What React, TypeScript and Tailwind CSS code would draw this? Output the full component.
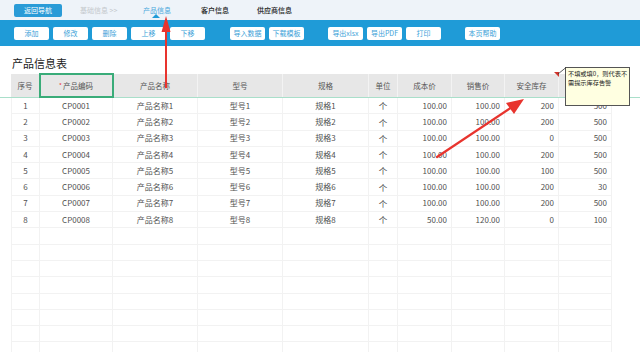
import React from 'react';

const font = { fontFamily: '"Noto Sans CJK SC", "Noto Sans", sans-serif' };

const rows = [
  ['1', 'CP0001', '产品名称1', '型号1', '规格1', '个', '100.00', '100.00', '200', '500'],
  ['2', 'CP0002', '产品名称2', '型号2', '规格2', '个', '100.00', '100.00', '200', '500'],
  ['3', 'CP0003', '产品名称3', '型号3', '规格3', '个', '100.00', '100.00', '0', '500'],
  ['4', 'CP0004', '产品名称4', '型号4', '规格4', '个', '100.00', '100.00', '200', '500'],
  ['5', 'CP0005', '产品名称5', '型号5', '规格5', '个', '100.00', '100.00', '100', '500'],
  ['6', 'CP0006', '产品名称6', '型号6', '规格6', '个', '100.00', '100.00', '200', '30'],
  ['7', 'CP0007', '产品名称7', '型号7', '规格7', '个', '100.00', '100.00', '200', '500'],
  ['8', 'CP0008', '产品名称8', '型号8', '规格8', '个', '50.00', '120.00', '0', '100'],
];

// last header is hidden behind the comment box
const headers = ['序号', '产品编码', '产品名称', '型号', '规格', '单位', '成本价', '销售价', '安全库存', ''];

const cols = 'grid grid-cols-[29px_73px_85px_85px_86px_29px_54px_53px_54px_53px]';

const Btn = ({ label }: { label: string }) => (
  <button className="w-[35px] h-[13px] bg-white rounded-[2px] text-[7px] leading-[13px] text-[#3b9fd8] text-center">
    {label}
  </button>
);

export default function App() {
  return (
    <div lang="zh-CN" className="relative w-[640px] h-[352px] overflow-hidden bg-white text-[#505050] antialiased" style={font}>
      {/* Top nav */}
      <div className="h-[20px] bg-[#eef3f9] flex items-center text-[7px]">
        <div className="ml-[14px] w-[48px] h-[13px] bg-[#2a9bd7] rounded-[2px] text-white flex items-center justify-center">
          返回导航
        </div>
        <span className="ml-[18px] w-[45px] text-[#c4c8cc]">基础信息 &gt;&gt;</span>
        <span className="relative ml-[18px] w-[58px] text-[#4aa8dc]">
          产品信息
          <span className="absolute left-[9px] top-[9px] w-0 h-0 border-l-[4px] border-r-[4px] border-b-[4px] border-l-transparent border-r-transparent border-b-[#1f9bd7]" />
        </span>
        <span className="w-[56px] text-[#222] font-medium">客户信息</span>
        <span className="text-[#222] font-medium">供应商信息</span>
      </div>

      {/* Toolbar */}
      <div className="h-[26px] bg-[#1f9bd7] flex items-center pl-[14px]">
        <div className="flex gap-[4px]">
          {['添加', '修改', '删除', '上移', '下移'].map((b) => <Btn key={b} label={b} />)}
        </div>
        <div className="flex gap-[4px] ml-[25px]">
          {['导入数据', '下载模板'].map((b) => <Btn key={b} label={b} />)}
        </div>
        <div className="flex gap-[4px] ml-[24px]">
          {['导出xlsx', '导出PDF', '打印'].map((b) => <Btn key={b} label={b} />)}
        </div>
        <div className="flex ml-[24px]">
          <Btn label="本页帮助" />
        </div>
      </div>

      {/* Title */}
      <div className="h-[28px] pt-[6px] pl-[12px] flex items-center text-[11px] text-[#222]">产品信息表</div>

      {/* Table header */}
      <div className="border-b border-[#a9dfca] pl-[11px]">
        <div className={`${cols} w-[601px] h-[23px] bg-[#e7e7e7] text-[7.5px] text-[#555]`}>
          {headers.map((h, i) => (
            <div
              key={i}
              className={`flex items-center justify-center border-r border-[#f3f3f3] ${
                i === 1 ? 'outline-2 outline-[#3aac79] -outline-offset-1' : ''
              }`}
            >
              {i === 1 && <span className="text-[#e33] text-[6px] mr-[1px]">*</span>}
              {h}
            </div>
          ))}
        </div>
      </div>

      {/* Body */}
      <div className="pl-[11px]">
        {rows.map((r) => (
          <div key={r[0]} className={`${cols} w-[601px] h-[16.3px] border-b border-[#f2f2f2] text-[8px]`}>
            {r.map((c, i) => (
              <div
                key={i}
                className={`flex items-center border-r border-[#f2f2f2] ${
                  i >= 6 ? 'justify-end pr-[4px]' : 'justify-center'
                } ${i === 0 ? 'border-l' : ''}`}
              >
                {i === 5 ? (
                  <span className="font-['Noto_Sans_CJK_JP',sans-serif] text-[8.5px] text-[#444]">{c}</span>
                ) : (
                  c
                )}
              </div>
            ))}
          </div>
        ))}
        {Array.from({ length: 8 }).map((_, k) => (
          <div key={k} className={`${cols} w-[601px] h-[16.3px] border-b border-[#f2f2f2]`}>
            {headers.map((_h, i) => (
              <div key={i} className={`border-r border-[#f2f2f2] ${i === 0 ? 'border-l' : ''}`} />
            ))}
          </div>
        ))}
      </div>

      {/* Comment tooltip */}
      <div className="absolute left-[565px] top-[67px] w-[65px] h-[39px] bg-[#ffffe1] border border-[#555] pl-[2px] pr-[1px] pt-[1px] text-[6.2px] leading-[9px] text-[#222]">
        不填或填0，则代表不需提示库存告警
      </div>

      {/* Annotations */}
      <svg className="absolute inset-0 pointer-events-none" width="640" height="352">
        <polygon points="554,72 559,72 559,77" fill="#d0342c" />
        <line x1="558" y1="74" x2="566" y2="67.5" stroke="#333" strokeWidth="0.8" />
        <line x1="166" y1="30" x2="166" y2="88" stroke="#e8342e" strokeWidth="2" />
        <polygon points="166,16 161.5,32 170.5,32" fill="#e8342e" />
        <line x1="437" y1="157" x2="512" y2="107" stroke="#e8342e" strokeWidth="2.2" strokeLinecap="round" />
        <polygon points="524,99 506,103 514,114" fill="#e8342e" />
      </svg>
    </div>
  );
}
